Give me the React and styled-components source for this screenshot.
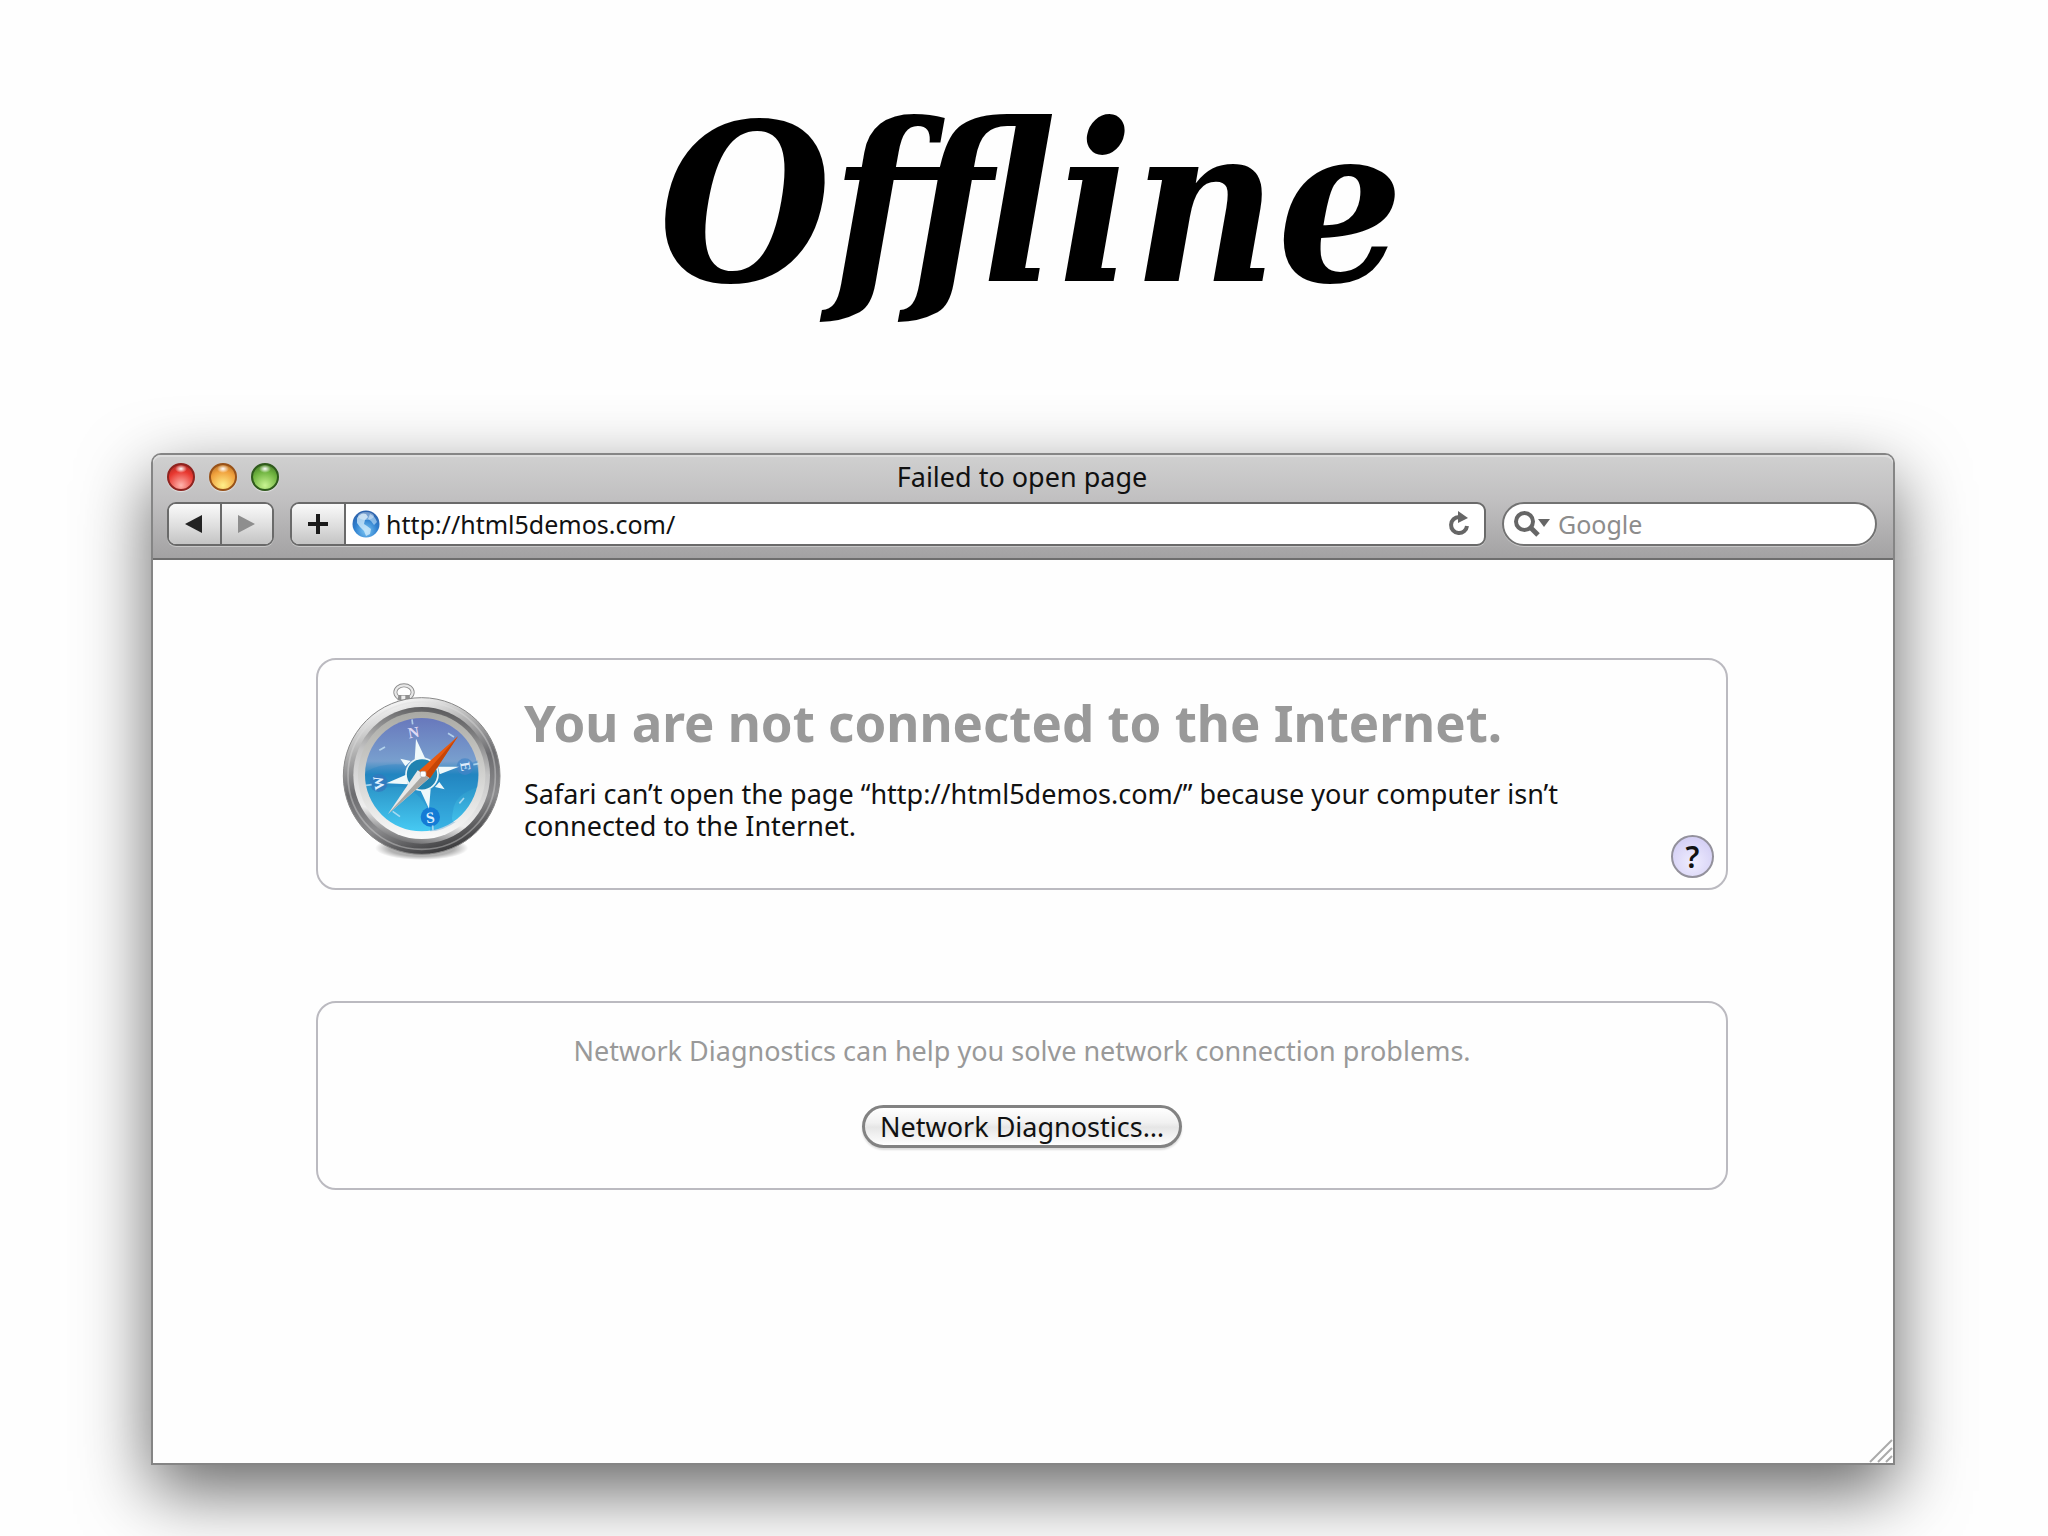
import styled, { createGlobalStyle } from 'styled-components';

const GlobalStyle = createGlobalStyle`
  * {
    box-sizing: border-box;
  }

  body {
    margin: 0;
    background-color: #fefefe;
    font-family: "Noto Sans", "Open Sans", sans-serif;
    font-size: 27px;
    line-height: 32px;
    color: #111;
  }

  button, input {
    font: inherit;
    color: inherit;
  }
`;

const Page = styled.div`
  display: flex;
  flex-direction: column;
  min-height: 100vh;
  padding: 0 153px 71px 151px;
`;

const Title = styled.h1`
  margin: 0;
  padding: 80px 0 0 16px;
  height: 453px;
  text-align: center;
  font-family: "DejaVu Serif Condensed", "DejaVu Serif", serif;
  font-size: 220px;
  line-height: 248px;
  font-style: italic;
  font-weight: bold;
  color: #000;
`;

const Window = styled.main`
  flex: 1;
  display: flex;
  flex-direction: column;
  border: 2px solid #858585;
  border-radius: 10px 10px 0 0;
  background-color: #fefefe;
  box-shadow: 0 26px 70px rgba(0, 0, 0, 0.6);
`;

const Chrome = styled.header`
  padding: 0 16px 12px 14px;
  border-bottom: 2px solid #6e6e6e;
  border-radius: 8px 8px 0 0;
  background: linear-gradient(#d0d0d0, #c0bfc0 45%, #a3a2a3);
  box-shadow: inset 0 2px 0 #dedede;
`;

const TitleBar = styled.div`
  display: grid;
  grid-template-columns: 1fr auto 1fr;
  align-items: center;
  height: 44px;
  margin-bottom: 3px;
`;

const Lights = styled.div`
  display: flex;
  gap: 14px;
`;

const Light = styled.button`
  width: 28px;
  height: 28px;
  padding: 0;
  border: 2px solid ${props => props.$rim};
  border-radius: 50%;
  background:
    radial-gradient(ellipse 6px 4px at 50% 16%, #fff, rgba(255, 255, 255, 0)),
    radial-gradient(circle at 50% 85%, ${props => props.$glow}, ${props => props.$color} 60%, ${props => props.$rim} 110%);
  box-shadow: 0 1px 1px #e4e4e4;
`;

const ToolBar = styled.div`
  display: flex;
  align-items: center;
  height: 44px;
`;

const Group = styled.div`
  display: flex;
  width: ${props => props.$width};
  flex: ${props => (props.$grow ? 1 : 'none')};
  height: 44px;
  margin-right: 16px;
  border: 2px solid #6a6a6a;
  border-radius: 9px;
  background-color: #fff;
  overflow: hidden;
  box-shadow: 0 1px 0 #c8c8c8;
`;

const ToolButton = styled.button`
  display: flex;
  align-items: center;
  justify-content: center;
  flex: ${props => (props.$wide ? '0 0 54px' : 1)};
  padding: 0;
  border: 0;
  border-right: ${props => (props.$divider ? '2px solid #6a6a6a' : 0)};
  background: linear-gradient(#fafafa, #dedede 55%, #c4c4c4);
`;

const Field = styled.label`
  flex: 1;
  display: flex;
  align-items: center;
  gap: 6px;
  padding: 0 6px;
  min-width: 0;
`;

const TextInput = styled.input`
  flex: 1;
  min-width: 0;
  height: 36px;
  padding: 0;
  border: 0;
  outline: 0;
  background: transparent;
  font-size: 25px;

  &::placeholder {
    color: #8c8c8c;
    opacity: 1;
  }
`;

const Reload = styled.button`
  display: flex;
  padding: 0 14px 0 0;
  align-items: center;
  border: 0;
  background: transparent;
`;

const Search = styled.label`
  display: flex;
  align-items: center;
  gap: 8px;
  width: 375px;
  height: 44px;
  padding: 0 20px 0 10px;
  border: 2px solid #727272;
  border-radius: 22px;
  background-color: #fff;
  box-shadow: 0 1px 0 #c8c8c8;
`;

const Content = styled.div`
  flex: 1;
  display: flex;
  flex-direction: column;
  gap: 111px;
  padding: 98px 165px 0 163px;
`;

const Card = styled.section`
  display: flex;
  border: 2px solid #bbbac0;
  border-radius: 20px;
`;

const ErrorCard = styled(Card)`
  gap: 22px;
  height: 232px;
  padding: 22px 12px 10px 24px;
`;

const Message = styled.div`
  flex: 1;
`;

const Heading = styled.h2`
  margin: 8px 0 24px;
  font-size: 51px;
  line-height: 64px;
  font-weight: bold;
  color: #999;
`;

const Text = styled.p`
  margin: 0;
  max-width: 1080px;
`;

const Help = styled.button`
  align-self: flex-end;
  width: 43px;
  height: 43px;
  padding: 0;
  border: 2px solid #93919c;
  border-radius: 50%;
  background: radial-gradient(circle at 50% 65%, #efedff, #d5d0f5 75%);
  font-size: 30px;
  font-weight: 600;
`;

const DiagnosticsCard = styled(Card)`
  flex-direction: column;
  align-items: center;
  height: 189px;
  padding: 32px 0 0;
  gap: 38px;
  color: #999;
`;

const PushButton = styled.button`
  height: 43px;
  padding: 0 15px;
  border: 3px solid #828282;
  border-radius: 22px;
  background: linear-gradient(#fff, #f1f1f1 40%, #e6e6e6 52%, #fff);
  box-shadow: 0 2px 2px #ddd;
  line-height: 36px;
  color: #111;
`;

const Grip = styled.svg`
  align-self: flex-end;
  display: block;
`;

function Globe() {
  return (
    <svg width="28" height="28" viewBox="0 0 28 28">
      <defs>
        <radialGradient id="globe" cx="50%" cy="75%" r="70%">
          <stop offset="0" stopColor="#7cc8f5" />
          <stop offset="0.6" stopColor="#2f80cf" />
          <stop offset="1" stopColor="#2c62ac" />
        </radialGradient>
      </defs>
      <circle cx="14" cy="14" r="13.5" fill="url(#globe)" />
      <path d="M5 8Q9 2 14 4l2 3-3 3-1 4 3 2 4 3-1 5-4 2-2-5-4-4-3-4Z" fill="#d8effc" opacity=".75" />
      <path d="M18 4q5 2 7 8l-3 3-3-4-3-2Z" fill="#c6e5fa" opacity=".6" />
      <ellipse cx="14" cy="6" rx="8" ry="4" fill="#fff" opacity=".35" />
    </svg>
  );
}

function Compass() {
  return (
    <svg width="160" height="178" viewBox="96 94 480 534">
      <defs>
        <linearGradient id="rim" x1="0.3" y1="0" x2="0.6" y2="1">
          <stop offset="0" stopColor="#ffffff" />
          <stop offset="0.25" stopColor="#b5b5b5" />
          <stop offset="0.5" stopColor="#6c6c6f" />
          <stop offset="0.75" stopColor="#8c8c8e" />
          <stop offset="1" stopColor="#39393b" />
        </linearGradient>
        <linearGradient id="bevel" x1="0.6" y1="0" x2="0.4" y2="1">
          <stop offset="0" stopColor="#59595b" />
          <stop offset="0.4" stopColor="#c4c4c4" />
          <stop offset="0.8" stopColor="#eeeeee" />
          <stop offset="1" stopColor="#6c6c6e" />
        </linearGradient>
        <linearGradient id="ring" x1="0.5" y1="0" x2="0.5" y2="1">
          <stop offset="0" stopColor="#a9a9a4" />
          <stop offset="0.5" stopColor="#d2d2d0" />
          <stop offset="1" stopColor="#fafafa" />
        </linearGradient>
        <linearGradient id="dial" x1="0.5" y1="0" x2="0.5" y2="1">
          <stop offset="0" stopColor="#6878bc" />
          <stop offset="0.38" stopColor="#789fce" />
          <stop offset="0.5" stopColor="#2588be" />
          <stop offset="1" stopColor="#46caf3" />
        </linearGradient>
        <radialGradient id="shade">
          <stop offset="0.7" stopColor="#000" stopOpacity="0.3" />
          <stop offset="1" stopColor="#000" stopOpacity="0" />
        </radialGradient>
      </defs>
      <ellipse cx="335" cy="592" rx="140" ry="36" fill="url(#shade)" />
      <ellipse cx="282" cy="125" rx="26" ry="21" fill="none" stroke="#8b8b8b" strokeWidth="12" />
      <ellipse cx="282" cy="125" rx="26" ry="21" fill="none" stroke="#e8e8e8" strokeWidth="7" />
      <path d="M262 149l4-16h32l4 16Z" fill="#8f8f8f" />
      <path d="M274 147v-12h12v12Z" fill="#eee" />
      <circle cx="335" cy="376" r="235" fill="url(#rim)" stroke="#888" strokeWidth="3" />
      <circle cx="335" cy="375" r="221" fill="none" stroke="#dedede" strokeWidth="5" opacity=".4" />
      <circle cx="335" cy="374" r="205" fill="url(#bevel)" />
      <circle cx="335" cy="374" r="191" fill="url(#ring)" />
      <circle cx="335" cy="372" r="170" fill="url(#dial)" />
      <path d="M167 363q70-38 168-10 76 22 168-24 7 44-1 81-68 22-73 71-11 48 18 26-48 35-87 35 2-52-10-74-42-66-96-59-51 5-87-10Z" fill="#1c7ec4" opacity=".28" />
      <g fontFamily="Liberation Serif, serif" fontWeight="bold" textAnchor="middle">
        <circle cx="361" cy="499" r="29" fill="#147bd5" />
        <circle cx="206" cy="397" r="27" fill="#3477bd" opacity=".75" />
        <circle cx="465" cy="348" r="25" fill="#4384c7" opacity=".7" />
        <text x="311" y="261" fontSize="46" fill="#e0daf5" transform="rotate(-10 311 247)">N</text>
        <text x="361" y="516" fontSize="46" fill="#d9efff" transform="rotate(-8 361 500)">S</text>
        <text x="206" y="411" fontSize="42" fill="#e1f1ff" transform="rotate(-100 206 397)">W</text>
        <text x="466" y="362" fontSize="42" fill="#dceafa" transform="rotate(80 466 348)">E</text>
      </g>
      <circle cx="336" cy="371" r="48" fill="#2083b1" stroke="#e7f4f7" strokeWidth="5" />
      <g fill="#eff9fb">
        <path d="M318 264l27 58-31 6ZM229 398l59-26 6 29ZM357 474l-25-54 30-5ZM447 348l-63 0 5 23Z" />
        <path d="M271 324l31 7-16 16ZM288 429l6-29 14 16ZM404 416l-29-7 13-15ZM390 314l-4 29-16-14Z" />
      </g>
      <path d="M168 404l17-2M490 342l16-3M306 206l2 15M368 524l1 15M208 299l17-10M448 458l14-16M248 482l22 16M414 248l18 11" stroke="#c8e7f8" strokeWidth="5" opacity=".75" />
      <path d="M444 257L326 361l34 22Z" fill="#e8590f" />
      <path d="M444 257L343 372l17 11Z" fill="#c64506" />
      <path d="M234 490L323 359l35 23Z" fill="#e8e8e8" />
      <path d="M234 490L341 371l17 11Z" fill="#aaa7a3" />
      <rect x="331" y="362" width="17" height="17" rx="5" fill="#fff" stroke="#aaa" strokeWidth="2" />
    </svg>
  );
}

function App() {
  return (
    <>
      <GlobalStyle />
      <Page>
        <Title>Offline</Title>

        <Window>
          <Chrome>
            <TitleBar>
              <Lights>
                <Light aria-label="Close" $rim="#8e2420" $color="#e8372f" $glow="#ffb5ae" />
                <Light aria-label="Minimize" $rim="#985219" $color="#f0a03c" $glow="#fff08a" />
                <Light aria-label="Zoom" $rim="#2f5a1c" $color="#6cb13d" $glow="#c8f491" />
              </Lights>
              <span>Failed to open page</span>
            </TitleBar>

            <ToolBar>
              <Group $width="107px">
                <ToolButton $divider aria-label="Back">
                  <svg width="18" height="18" viewBox="0 0 18 18"><path d="M0 9L17 0v18Z" fill="#222" /></svg>
                </ToolButton>
                <ToolButton aria-label="Forward">
                  <svg width="18" height="18" viewBox="0 0 18 18"><path d="M17 9L0 0v18Z" fill="#8e8e8e" /></svg>
                </ToolButton>
              </Group>

              <Group $grow>
                <ToolButton $divider $wide aria-label="Add bookmark">
                  <svg width="20" height="20" viewBox="0 0 20 20"><path d="M10 0v20M0 10h20" stroke="#1a1a1a" strokeWidth="4" /></svg>
                </ToolButton>
                <Field>
                  <Globe />
                  <TextInput aria-label="Address" defaultValue="http://html5demos.com/" />
                </Field>
                <Reload aria-label="Reload">
                  <svg width="22" height="26" viewBox="0 0 22 26">
                    <path d="M11 6A8 8 0 1 0 19 15" fill="none" stroke="#666" strokeWidth="4" />
                    <path d="M10 0l10 7-10 5Z" fill="#666" />
                  </svg>
                </Reload>
              </Group>

              <Search>
                <svg width="36" height="26" viewBox="0 0 36 26">
                  <circle cx="10.500" cy="10.500" r="8.500" fill="none" stroke="#666" strokeWidth="4" />
                  <path d="M16 16l8 8" stroke="#666" strokeWidth="5" />
                  <path d="M24 8h12l-6 8Z" fill="#666" />
                </svg>
                <TextInput aria-label="Search" placeholder="Google" />
              </Search>
            </ToolBar>
          </Chrome>

          <Content>
            <ErrorCard>
              <Compass />
              <Message>
                <Heading>You are not connected to the Internet.</Heading>
                <Text>
                  Safari can’t open the page “http://html5demos.com/” because your computer isn’t connected to the Internet.
                </Text>
              </Message>
              <Help aria-label="Help">?</Help>
            </ErrorCard>

            <DiagnosticsCard>
              <Text>Network Diagnostics can help you solve network connection problems.</Text>
              <PushButton>Network Diagnostics…</PushButton>
            </DiagnosticsCard>
          </Content>

          <Grip width="24" height="24" viewBox="0 0 24 24">
            <path d="M1 23L23 1M9 23L23 9M17 23l6-6" stroke="#aaa" strokeWidth="2" />
          </Grip>
        </Window>
      </Page>
    </>
  );
}

export default App;
